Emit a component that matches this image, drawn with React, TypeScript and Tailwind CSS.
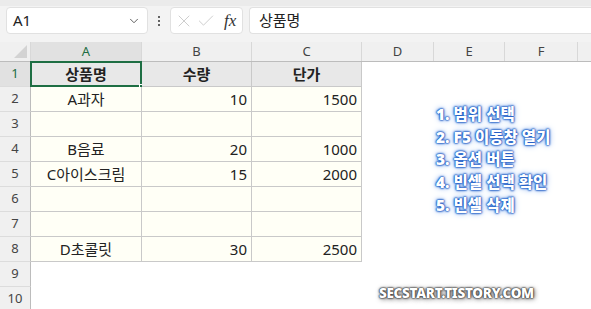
import { ChevronDown, X, Check } from 'lucide-react';

const COLS = [
  { key: 'A', w: 'w-[111px]' },
  { key: 'B', w: 'w-[110px]' },
  { key: 'C', w: 'w-[110px]' },
  { key: 'D', w: 'w-[72px]' },
  { key: 'E', w: 'w-[71px]' },
  { key: 'F', w: 'w-[73px]' },
];

const ROWS: (string | null)[][] = [
  ['상품명', '수량', '단가'],
  ['A과자', '10', '1500'],
  ['', '', ''],
  ['B음료', '20', '1000'],
  ['C아이스크림', '15', '2000'],
  ['', '', ''],
  ['', '', ''],
  ['D초콜릿', '30', '2500'],
  null,
  null,
];

const STEPS = ['1. 범위 선택', '2. F5 이동창 열기', '3. 옵션 버튼', '4. 빈셀 선택 확인', '5. 빈셀 삭제'];

const font = "font-['Noto_Sans','Noto_Sans_CJK_KR',sans-serif]";

export default function App() {
  return (
    <div className={`relative w-[591px] h-[309px] overflow-hidden bg-white text-[#222] ${font}`}>
      {/* Formula bar */}
      <div className="h-[42px] bg-[#f3f3f3] border-t-[6px] border-[#ebebeb] flex items-start pt-[1px]">
        <div className="ml-[6px] w-[142px] h-[27px] bg-white rounded-[4px] border border-[#e1e1e1] flex items-center px-[6px]">
          <span className="text-[15px] text-[#222] flex-1 leading-none">A1</span>
          <ChevronDown size={14} strokeWidth={1.6} className="text-[#555]" />
        </div>
        <div className="w-[22px] h-[27px] flex items-center justify-center">
          <div className="flex flex-col gap-[2px]">
            <span className="w-[2px] h-[2px] bg-[#333] rounded-full" />
            <span className="w-[2px] h-[2px] bg-[#333] rounded-full" />
            <span className="w-[2px] h-[2px] bg-[#333] rounded-full" />
          </div>
        </div>
        <div className="w-[73px] h-[27px] bg-white rounded-[4px] border border-[#e1e1e1] flex items-center pl-[3px] gap-[2px]">
          <X size={20} strokeWidth={1} className="text-[#c4c4c4]" />
          <Check size={20} strokeWidth={1} className="text-[#c4c4c4]" />
          <span className="font-['Liberation_Serif',serif] italic text-[17px] text-[#333] leading-none ml-[6px]">fx</span>
        </div>
        <div className="ml-[6px] flex-1 h-[27px] bg-white rounded-l-[4px] border border-r-0 border-[#e1e1e1] flex items-center pl-[9px]">
          <span className="text-[15px] text-[#222] leading-none">상품명</span>
        </div>
      </div>

      {/* Column headers */}
      <div className="flex h-[20px] bg-[#f0f0f0] border-b border-[#bcbcbc]">
        <div className="w-[31px] relative border-r border-[#d8d8d8]">
          <div className="absolute right-[3px] bottom-[3px] w-0 h-0 border-l-[13px] border-l-transparent border-b-[13px] border-b-[#d3d3d3]" />
        </div>
        {COLS.map((c) => (
          <div
            key={c.key}
            className={`${c.w} shrink-0 flex items-center justify-center text-[13px] border-r border-[#d8d8d8] ${
              c.key === 'A' ? 'bg-[#e1e1e1] text-[#1e6e43]' : 'text-[#444]'
            }`}
          >
            {c.key}
          </div>
        ))}
        <div className="flex-1" />
      </div>

      {/* Rows */}
      {ROWS.map((row, i) => (
        <div key={i} className="flex h-[25px]">
          <div
            className={`w-[31px] shrink-0 flex items-center justify-center text-[13px] border-r border-[#bcbcbc] border-b border-b-[#dcdcdc] ${
              i === 0 ? 'bg-[#e1e1e1] text-[#1e6e43]' : 'bg-[#f0f0f0] text-[#444]'
            }`}
          >
            {i + 1}
          </div>
          {COLS.slice(0, 3).map((c, j) => {
            if (!row) return <div key={c.key} className={`${c.w} shrink-0`} />;
            const header = i === 0;
            const v = row[j];
            return (
              <div
                key={c.key}
                className={`${c.w} shrink-0 relative flex items-center px-[4px] text-[15px] border-r border-b border-[#c9c9c9] ${
                  header ? 'bg-[#e8e8e8] font-bold justify-center' : 'bg-[#fffff6]'
                } ${!header && j > 0 ? 'justify-end' : 'justify-center'}`}
              >
                {v}
                {header && j === 0 && (
                  <>
                    <div className="absolute -left-[1px] -top-[1px] right-[-1px] bottom-[-1px] border-2 border-[#1e6e43]" />
                    <div className="absolute right-[-4px] bottom-[-4px] w-[6px] h-[6px] bg-[#1e6e43] border border-white" />
                  </>
                )}
              </div>
            );
          })}
          <div className="flex-1" />
        </div>
      ))}

      {/* Annotation */}
      <div className="absolute left-[436px] top-[103px] flex flex-col text-white font-black text-[15.5px] leading-[22.7px] [text-shadow:0_0_1px_#1a56c0,0_0_2px_#1a56c0,0_0_2px_#1a56c0,0_0_3px_#2a6fd6,0_0_6px_#6a9be6]">
        {STEPS.map((s) => (
          <span key={s}>{s}</span>
        ))}
      </div>

      {/* Watermark */}
      <div className="absolute left-[379px] top-[283px] text-white font-black text-[13.5px] tracking-[-0.3px] [text-shadow:0_0_1px_#333,0_0_2px_#333,0_0_2px_#333,1px_1px_5px_#555]">
        SECSTART.TISTORY.COM
      </div>
    </div>
  );
}
